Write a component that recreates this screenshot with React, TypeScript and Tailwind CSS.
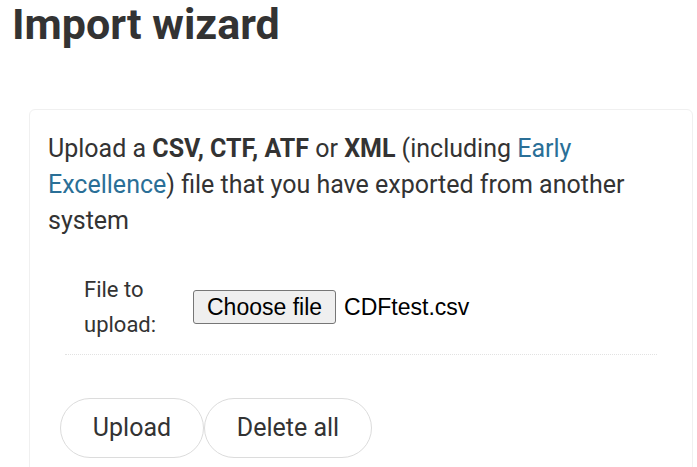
import React from "react";

export default function App() {
  return (
    <div className="min-h-screen bg-white font-['Roboto',sans-serif] text-[#333]">
      <div className="px-3">
        <h1 className="text-[43px] font-bold leading-[48px] text-[#333]">
          Import wizard
        </h1>
      </div>

      <div className="ml-[29px] mr-[4px] mt-[61px] rounded-[6px] border border-[#f0f0f0] px-[18px] pt-[21px] pb-10">
        <p className="text-[25px] leading-[36px] text-[#333]">
          Upload a <b>CSV, CTF, ATF</b> or <b>XML</b> (including{" "}
          <a href="#" className="text-[#2a6f97]">
            Early Excellence
          </a>
          ) file that you have exported from another system
        </p>

        <div className="mx-[17px] mt-[33px] flex items-center border-b border-dotted border-[#e2e2e2] pb-[12px] pl-[19px]">
          <label className="w-[109px] text-[22px] leading-[35px] text-[#333]">
            File to upload:
          </label>
          <div className="flex items-center font-['Liberation_Sans',Arial,sans-serif] text-[23px] text-black">
            <button
              type="button"
              className="h-[34px] rounded-[3px] border border-[#767676] bg-[#efefef] px-[13px] leading-none"
            >
              Choose file
            </button>
            <span className="ml-[8px]">CDFtest.csv</span>
          </div>
        </div>

        <div className="mt-[43px] ml-[12px] flex">
          <button
            type="button"
            className="h-[60px] w-[144px] rounded-full border border-[#dcdcdc] bg-white text-[25px] text-[#333]"
          >
            Upload
          </button>
          <button
            type="button"
            className="h-[60px] w-[168px] rounded-full border border-[#dcdcdc] bg-white text-[25px] text-[#333]"
          >
            Delete all
          </button>
        </div>
      </div>
    </div>
  );
}
